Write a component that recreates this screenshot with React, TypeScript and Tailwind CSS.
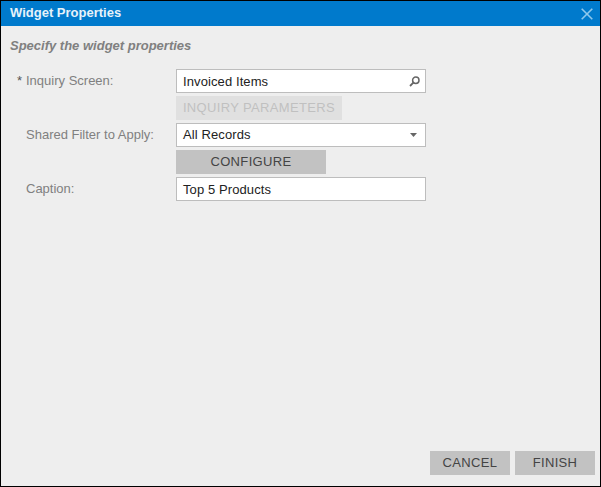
import React from "react";

const labelClass = "text-[13px] text-[#808080] leading-[24px]";
const inputClass =
  "h-6 w-[250px] border border-[#bdbdbd] bg-white pl-[6px] pr-[5px] flex items-center justify-between text-[13px] tracking-[0.1px] text-[#222222]";
const buttonClass =
  "h-6 bg-[#c2c2c2] flex items-center justify-center pb-[1px] text-[13px] tracking-[0.35px] text-[#444444]";

const SearchIcon = () => (
  <svg width="11" height="11" viewBox="0 0 11 11" fill="none" className="mb-[1px]">
    <circle cx="6.8" cy="4.2" r="3.2" stroke="#666666" strokeWidth="1.5" />
    <path d="M4.4 6.6 L1 10" stroke="#666666" strokeWidth="1.8" />
  </svg>
);

const App: React.FC = () => {
  return (
    <div
      className="w-[601px] h-[487px] border border-black bg-[#eeeeee] flex flex-col"
      style={{ fontFamily: '"Liberation Sans", Arial, sans-serif' }}
    >
      {/* Title bar */}
      <div className="h-[25px] shrink-0 bg-[#007acc] flex items-center justify-between pl-[9px] pr-[7px]">
        <span className="text-[13px] font-bold text-[#e6f2fa] mb-[1px]">Widget Properties</span>
        <svg width="12" height="12" viewBox="0 0 12 12" fill="none">
          <path d="M0.7 0.7 L11.3 11.3 M11.3 0.7 L0.7 11.3" stroke="#8fc8ec" strokeWidth="1.6" />
        </svg>
      </div>

      <div className="flex-1 flex flex-col pl-[9px] pr-[5px] pb-[11px]">
        <div className="mt-[12px] text-[13px] font-bold italic text-[#808080] leading-[16px]">
          Specify the widget properties
        </div>

        {/* Form */}
        <div className="mt-[15px] flex flex-col gap-[3px]">
          <div className="flex">
            <div className={`w-[166px] flex ${labelClass}`}>
              <span className="w-4 pl-[7px] text-[#555555]">*</span>
              <span>Inquiry Screen:</span>
            </div>
            <div className={`${inputClass} pt-[1px]`}>
              <span>Invoiced Items</span>
              <SearchIcon />
            </div>
          </div>
          <div className="flex">
            <div className="w-[166px]" />
            <div className={`${buttonClass} w-[166px] bg-[#e0e0e0] text-[#c0c0c0]`}>INQUIRY PARAMETERS</div>
          </div>
          <div className="flex">
            <div className={`w-[166px] pl-4 ${labelClass}`}>Shared Filter to Apply:</div>
            <div className={`${inputClass} pb-[1px]`}>
              <span>All Records</span>
              <svg width="7" height="4" viewBox="0 0 7 4" className="mr-[3px] mt-[1px]">
                <path d="M0 0 H7 L3.5 4 Z" fill="#666666" />
              </svg>
            </div>
          </div>
          <div className="flex">
            <div className="w-[166px]" />
            <div className={`${buttonClass} w-[150px]`}>CONFIGURE</div>
          </div>
          <div className="flex">
            <div className={`w-[166px] pl-4 ${labelClass}`}>Caption:</div>
            <div className={`${inputClass} pt-[1px]`}>
              <span>Top 5 Products</span>
            </div>
          </div>
        </div>

        {/* Footer */}
        <div className="mt-auto flex justify-end gap-[5px]">
          <div className={`${buttonClass} w-20`}>CANCEL</div>
          <div className={`${buttonClass} w-20`}>FINISH</div>
        </div>
      </div>
    </div>
  );
};

export default App;
